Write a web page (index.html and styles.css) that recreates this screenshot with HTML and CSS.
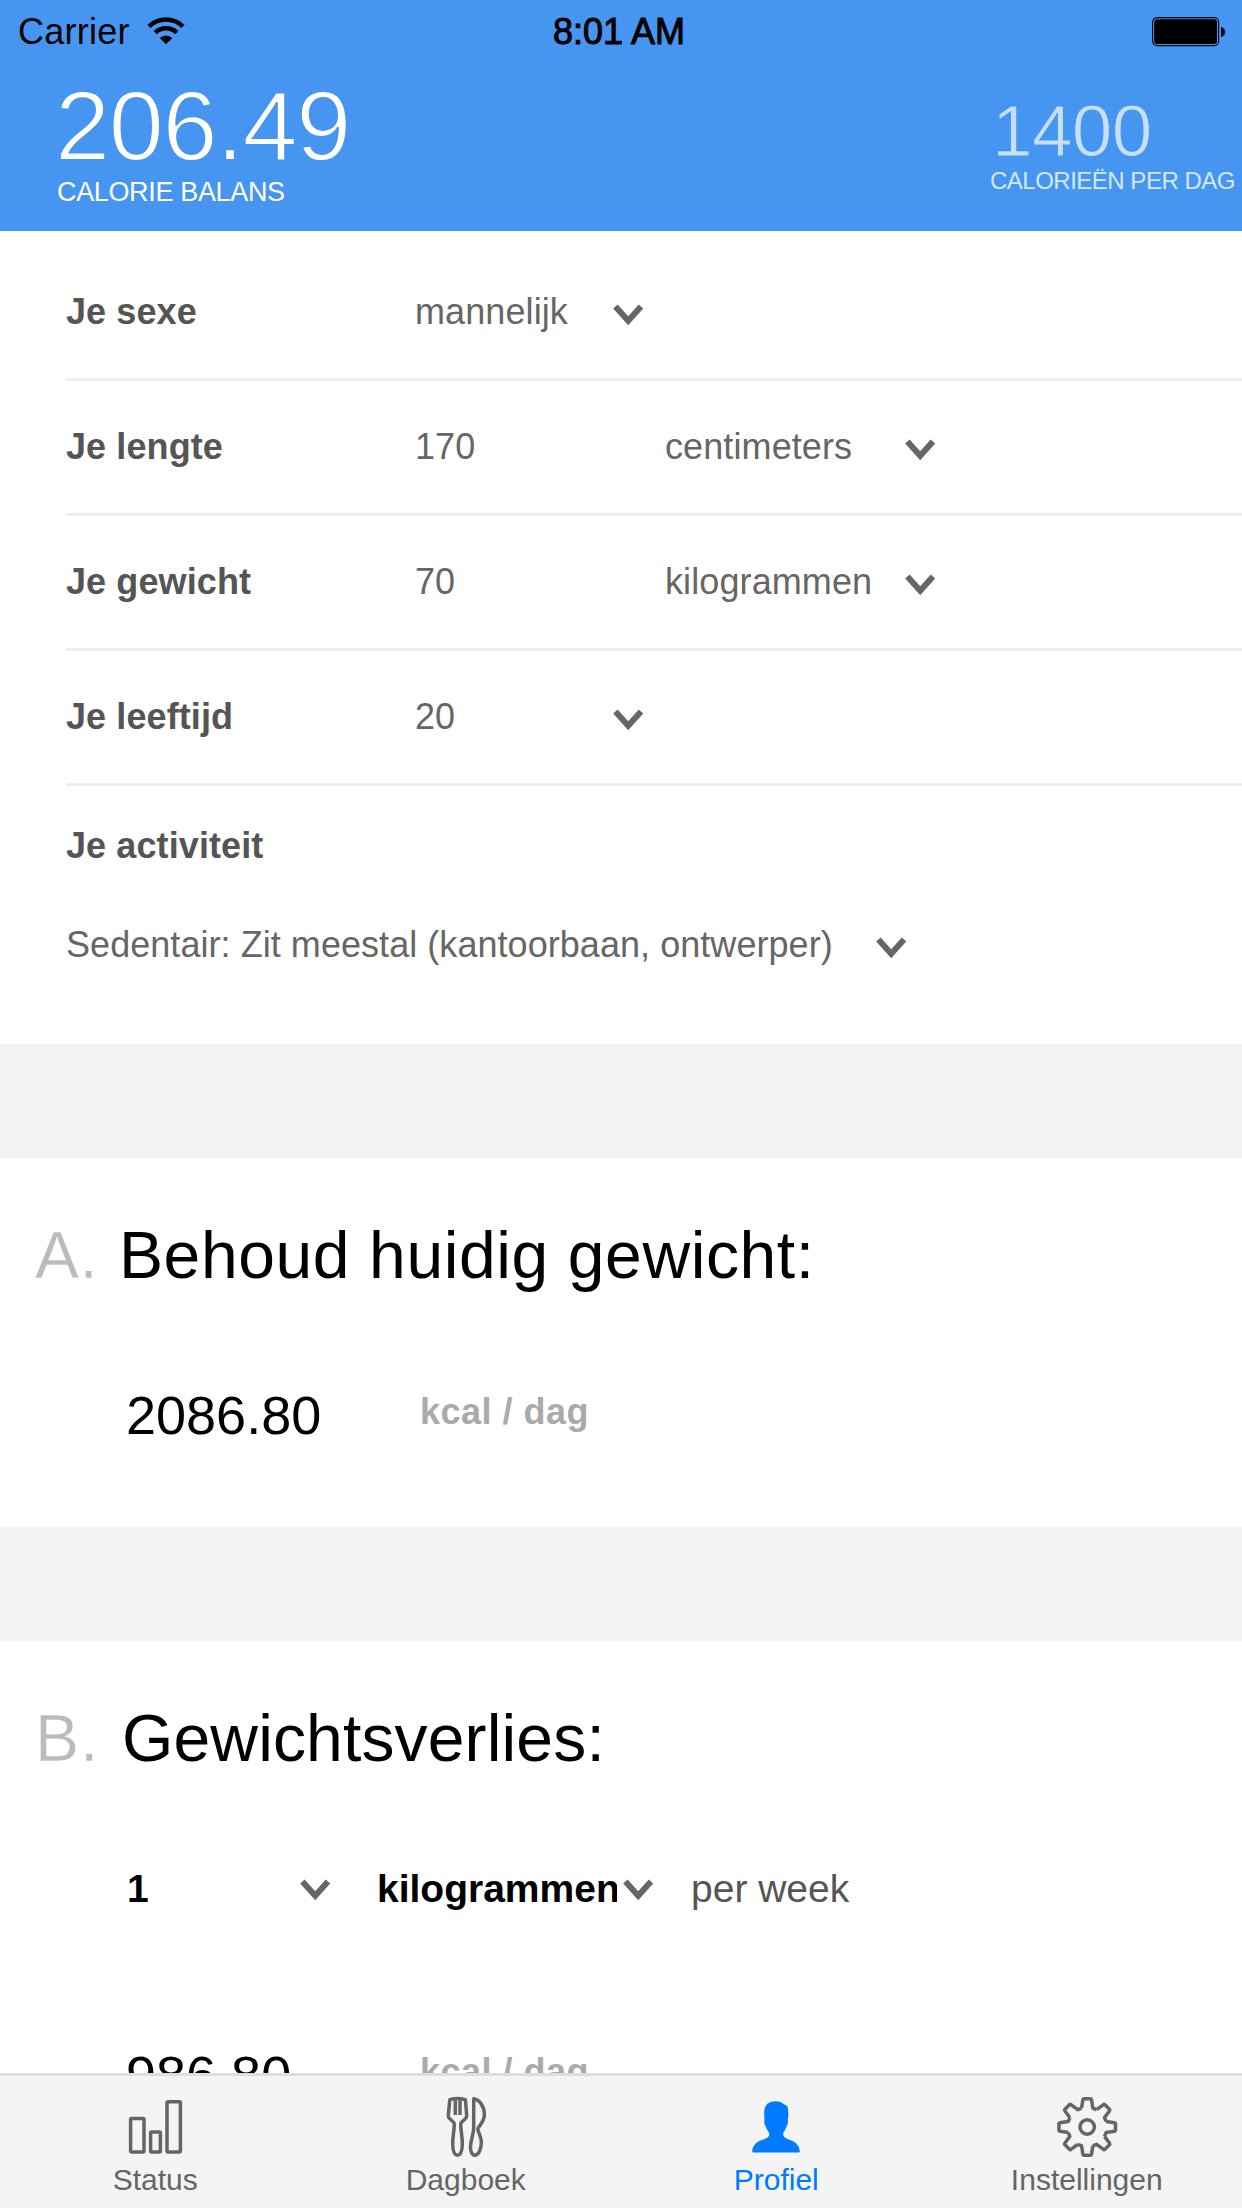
FILE: index.html
```html
<!DOCTYPE html>
<html lang="nl">
<head>
<meta charset="utf-8">
<title>Profiel</title>
<link rel="stylesheet" href="styles.css">
</head>
<body>
<svg class="defs" width="0" height="0">
  <symbol id="chevron" viewBox="0 0 31 22"><path d="M2.400 2.400 L15.200 16.800 L28 2.400" fill="none" stroke="#666" stroke-width="6"/></symbol>
</svg>
<div class="screen">
  <header class="header">
    <div class="statusbar">
      <div class="carrier">
        <span>Carrier</span>
        <svg class="wifi" viewBox="0 0 38 28"><g fill="none" stroke="#000" stroke-width="4.6"><path d="M2 9.3 A24.500 24.500 0 0 1 36 9.3"/><path d="M8.2 15.600 A15.600 15.600 0 0 1 29.800 15.600"/></g><path d="M19 27.300 L12.700 21 A9 9 0 0 1 25.300 21 Z"/></svg>
      </div>
      <span class="clock">8:01 AM</span>
      <svg class="battery" viewBox="0 0 74 30"><rect x=".6" y=".6" width="66" height="28" rx="4.5" fill="none" stroke="#000" stroke-width="1.1"/><rect x="2.2" y="2.2" width="62.800" height="24.800" rx="3"/><path d="M69 10 Q73 11 73 15 T69 20 Z"/></svg>
    </div>
    <div class="totals">
      <div class="balance"><span class="balance-value">206.49</span><span class="balance-label">CALORIE BALANS</span></div>
      <div class="target"><span class="target-value">1400</span><span class="target-label">CALORIEËN PER DAG</span></div>
    </div>
  </header>
  <main class="content">
    <section class="form">
      <div class="row"><b class="label">Je sexe</b><span class="value">mannelijk</span><svg class="chevron"><use href="#chevron"/></svg></div>
      <div class="row"><b class="label">Je lengte</b><span class="value value-wide">170</span><span class="unit">centimeters</span><svg class="chevron"><use href="#chevron"/></svg></div>
      <div class="row"><b class="label">Je gewicht</b><span class="value value-wide">70</span><span class="unit">kilogrammen</span><svg class="chevron"><use href="#chevron"/></svg></div>
      <div class="row"><b class="label">Je leeftijd</b><span class="value">20</span><svg class="chevron"><use href="#chevron"/></svg></div>
      <div class="activity">
        <b class="activity-title">Je activiteit</b>
        <div class="activity-row"><span class="activity-value">Sedentair: Zit meestal (kantoorbaan, ontwerper)</span><svg class="chevron"><use href="#chevron"/></svg></div>
      </div>
    </section>
    <section class="panel">
      <h2 class="title"><span class="letter">A.</span><span>Behoud huidig gewicht:</span></h2>
      <div class="result"><span class="amount">2086.80</span><b class="per-day">kcal / dag</b></div>
    </section>
    <section class="panel panel-loss">
      <h2 class="title"><span class="letter">B.</span><span>Gewichtsverlies:</span></h2>
      <div class="rate"><b class="rate-value">1</b><svg class="chevron"><use href="#chevron"/></svg><b class="rate-unit">kilogrammen</b><svg class="chevron"><use href="#chevron"/></svg><span class="rate-period">per week</span></div>
      <div class="result"><span class="amount">986.80</span><b class="per-day">kcal / dag</b></div>
    </section>
  </main>
  <nav class="tabs">
    <a class="tab"><svg class="icon" viewBox="0 0 64 64"><rect x="7.6" y="23.600" width="13.400" height="33.300" rx="1"/><rect x="27.600" y="37" width="9.800" height="19.900" rx="1"/><rect x="44" y="6.800" width="13.400" height="50.100" rx="1"/></svg><span>Status</span></a>
    <a class="tab"><svg class="icon" viewBox="0 0 64 64"><path d="M15.800 4.600 Q23.600 2.600 31.400 4.600 L32.700 20.500 Q32.800 22.500 31.300 23.800 L27.500 27.200 Q26.600 28.200 26.700 29.500 C26.800 37 28.600 42 28.300 50 C28 57 26 60.200 23.500 60.200 C21 60.200 19 57 18.700 50 C18.400 42 20.200 37 20.300 29.500 Q20.400 28.200 19.500 27.200 L15.700 23.800 Q14.200 22.500 14.300 20.500 Z M21.300 4.500 V20 M26 4.500 V20"/><path d="M39.700 3.800 C46 4.800 50.400 12 50.400 19.500 C50.400 26 46.600 29 44.200 33 Q43.600 34.200 44.100 35.600 C45 39 47.400 42 47.400 47.500 C47.200 55 44.200 60.200 40.800 60.200 C38 60.200 36.400 56.500 36.500 51.500 C36.600 45 39.500 40 39.700 33 Z"/></svg><span>Dagboek</span></a>
    <a class="tab tab-active"><svg class="icon" viewBox="0 0 64 64"><path d="M31.700 6.300 C35.500 6.300 38 7.500 40.200 9.600 Q43.600 10.400 43.800 12.500 L44.400 19.500 Q44.400 22 43.800 24.300 C44.500 27 43.600 30.300 42.200 31.800 C41.500 34.600 40.600 36.200 39.300 37.600 V40.500 C40.500 43.200 44.500 44.300 47.500 45.600 C53 48 55.700 52 55.700 56.400 Q55.700 57.600 54.400 57.600 H9.600 Q8.300 57.600 8.300 56.400 C8.300 52 11 48 16.500 45.600 C19.500 44.300 24 43.200 25.200 40.500 V37.600 C23.800 36.200 22.800 34.600 22 31.800 C20.600 30.300 19.700 27 20.600 24.300 Q20 21 20.200 17 C20.600 9.500 25 6.300 31.700 6.300 Z"/></svg><span>Profiel</span></a>
    <a class="tab"><svg class="icon" viewBox="0 0 64 64"><defs><path id="tooth" d="M-5.600 -18.900 L-4.300 -27.400 Q-4.100 -28.300 -3.200 -28.300 H3.200 Q4.100 -28.300 4.300 -27.400 L5.600 -18.900 L9.400 -17.300"/></defs><g transform="translate(32.2 32)"><use href="#tooth"/><use href="#tooth" transform="rotate(45)"/><use href="#tooth" transform="rotate(90)"/><use href="#tooth" transform="rotate(135)"/><use href="#tooth" transform="rotate(180)"/><use href="#tooth" transform="rotate(225)"/><use href="#tooth" transform="rotate(270)"/><use href="#tooth" transform="rotate(315)"/><circle r="7.2"/></g></svg><span>Instellingen</span></a>
  </nav>
</div>
</body>
</html>
```
FILE: styles.css
```css
body {
  margin: 0;
  font-family: "Liberation Sans", Arial, sans-serif;
  background: #fff;
}
.defs { position: absolute; }
.screen {
  display: flex;
  flex-direction: column;
  width: 1242px;
  height: 2208px;
  overflow: hidden;
}
svg { display: block; flex: none; }

/* Header */
.header {
  flex: none;
  height: 231px;
  background: #4696f1;
  color: #fff;
}
.statusbar {
  display: grid;
  grid-template-columns: 1fr auto 1fr;
  align-items: center;
  height: 62px;
  color: #000;
  font-size: 36px;
  line-height: 64px;
}
.carrier {
  display: flex;
  align-items: center;
  gap: 17px;
  padding-left: 18px;
  letter-spacing: 0.250px;
}
.wifi { width: 38px; height: 28px; margin-bottom: 3px; }
.clock { padding-right: 4px; -webkit-text-stroke: 1px #000; }
.battery {
  width: 74px;
  height: 30px;
  justify-self: end;
  margin-right: 16px;
}
.totals { display: flex; justify-content: space-between; }
.balance, .target { display: flex; flex-direction: column; white-space: nowrap; }
.balance { padding: 24px 0 0 57px; }
/* a stroke in the header colour slims the digits to a light weight */
.balance-value {
  margin-left: -2px;
  font-size: 99px;
  line-height: 80px;
  letter-spacing: -1.300px;
  -webkit-text-stroke: 1.800px #4696f1;
}
.balance-label { font-size: 27px; line-height: 53px; letter-spacing: -0.350px; }
.target { width: 252px; padding-top: 39px; }
.target-value {
  margin-left: 2px;
  font-size: 73px;
  line-height: 60px;
  letter-spacing: -0.700px;
  color: #c7dffb;
  -webkit-text-stroke: 1.100px #4696f1;
}
.target-label {
  font-size: 24px;
  line-height: 39px;
  letter-spacing: -0.500px;
  color: #d5e7fc;
}

/* Form */
.content { flex: 1; min-height: 0; overflow: hidden; }
.form {
  height: 798px;
  padding: 15px 0 0 66px;
  font-size: 36px;
  letter-spacing: 0.100px;
  color: #666;
}
.row {
  display: flex;
  align-items: center;
  height: 132px;
  border-bottom: 3px solid #eee;
}
.label { width: 349px; color: #555; }
.value { width: 198px; }
.value-wide { width: 250px; }
.unit { width: 240px; }
.chevron { width: 31px; height: 22px; margin-top: 6px; }
.activity-title { display: block; line-height: 119px; color: #555; }
.activity-row { display: flex; align-items: center; line-height: 80px; }
.activity-value { width: 810px; white-space: nowrap; letter-spacing: 0.050px; }

/* Result panels */
.panel { height: 369px; border-top: 114px solid #f2f3f5; }
.title {
  display: flex;
  margin: 0;
  padding: 40px 0 0 35px;
  font-size: 66px;
  font-weight: 400;
  line-height: 114px;
  letter-spacing: 0.600px;
}
.letter { width: 84px; color: #bbb; -webkit-text-stroke: 0.400px #fff; }
.panel-loss .title { letter-spacing: 0.150px; }
.panel-loss .letter { width: 87px; letter-spacing: 1px; }
.result {
  display: flex;
  align-items: center;
  padding: 50px 0 0 126px;
  line-height: 100px;
}
.amount { width: 294px; font-size: 54px; }
.per-day { font-size: 36px; color: #aaa; letter-spacing: 0.500px; margin-bottom: 6px; }
.rate {
  display: flex;
  align-items: center;
  padding: 54px 0 0 127px;
  font-size: 39px;
  line-height: 80px;
}
.rate .chevron { margin-top: 2px; }
.rate-value { width: 173px; }
.rate-unit { width: 240px; margin: 0 6px 0 46px; overflow: hidden; }
.rate-period { margin-left: 37px; color: #555; }
.panel-loss .result { padding-top: 93px; }

/* Tab bar */
.tabs {
  flex: none;
  display: grid;
  grid-template-columns: repeat(4, 1fr);
  height: 132px;
  border-top: 3px solid #ddd;
  background: #f4f4f4;
}
.tab {
  display: flex;
  flex-direction: column;
  align-items: center;
  padding-top: 19px;
  font-size: 30px;
  line-height: 42px;
  color: #656565;
}
.icon {
  width: 64px;
  height: 64px;
  fill: none;
  stroke: #656565;
  stroke-width: 3.500;
  stroke-linejoin: round;
}
.tab-active { color: #007aff; }
.tab-active .icon { fill: #007aff; stroke: none; }
```
